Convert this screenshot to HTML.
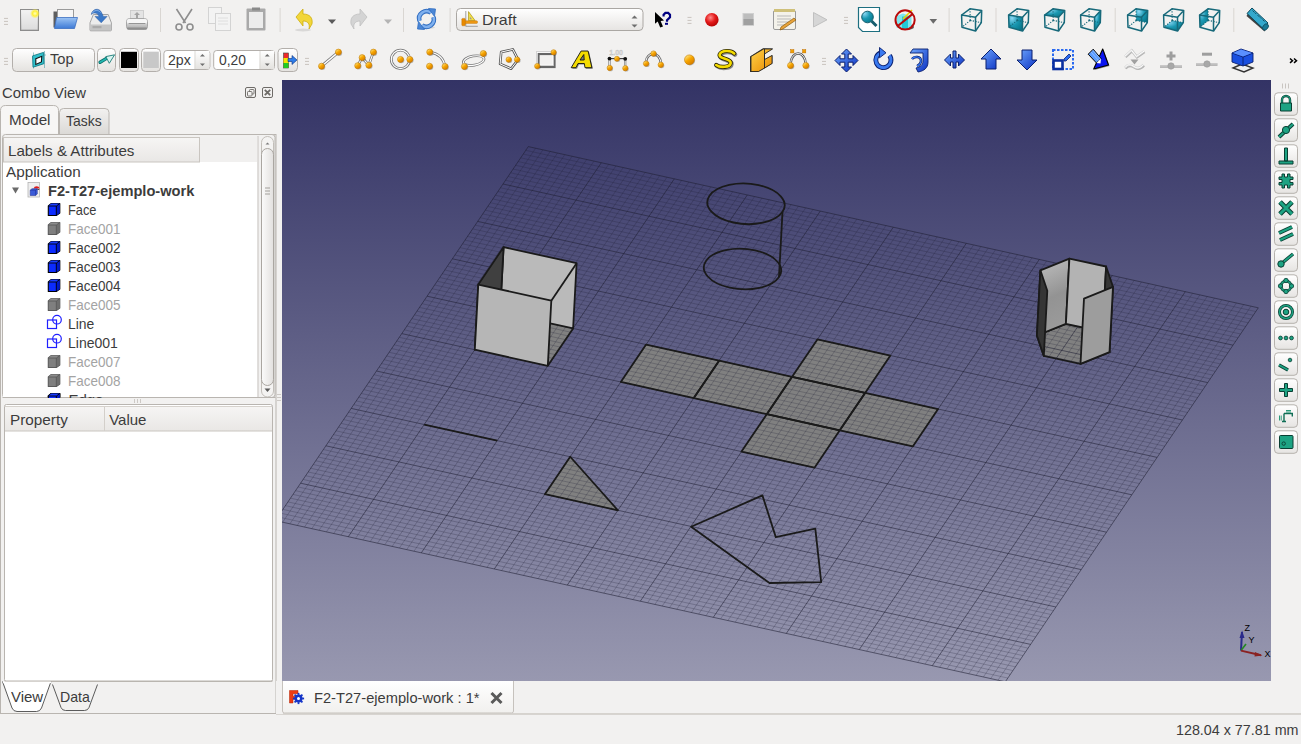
<!DOCTYPE html>
<html><head><meta charset="utf-8"><style>
*{box-sizing:border-box}
html,body{margin:0;padding:0}
body{width:1301px;height:744px;overflow:hidden;position:relative;background:#f2f1f0;font-family:"Liberation Sans",sans-serif;color:#3c3c3c}
.a{position:absolute;display:block}
.t{position:absolute;white-space:nowrap;font-size:15px;line-height:1;transform-origin:0 0;font-family:"Liberation Sans",sans-serif}
</style></head><body>
<svg class="a" style="left:0;top:0" width="1301" height="40" viewBox="0 0 1301 40">
<defs>
<linearGradient id="gOr" x1="0.2" y1="0.1" x2="0.8" y2="0.9"><stop offset="0" stop-color="#ffe27a"/><stop offset="0.45" stop-color="#f7a600"/><stop offset="1" stop-color="#d67c00"/></linearGradient>
<radialGradient id="gTeal" cx="0.25" cy="0.2" r="0.9"><stop offset="0" stop-color="#8ad8f4"/><stop offset="0.5" stop-color="#1b98b2"/><stop offset="1" stop-color="#07788c"/></radialGradient>
<linearGradient id="gBlue" x1="0" y1="0" x2="0" y2="1"><stop offset="0" stop-color="#9cc4f4"/><stop offset="1" stop-color="#3d7ad6"/></linearGradient>
<linearGradient id="gGray" x1="0" y1="0" x2="0" y2="1"><stop offset="0" stop-color="#f4f4f4"/><stop offset="1" stop-color="#a8a8a8"/></linearGradient>
<linearGradient id="gBtn" x1="0" y1="0" x2="0" y2="1"><stop offset="0" stop-color="#ffffff"/><stop offset="1" stop-color="#e6e4e2"/></linearGradient>
<radialGradient id="gRed" cx="0.4" cy="0.35" r="0.7"><stop offset="0" stop-color="#ff8a8a"/><stop offset="0.5" stop-color="#e41b1b"/><stop offset="1" stop-color="#b00000"/></radialGradient>
<radialGradient id="gGlow" cx="0.5" cy="0.5" r="0.5"><stop offset="0" stop-color="#ffffc0"/><stop offset="0.5" stop-color="#fff03a"/><stop offset="1" stop-color="#fff03a" stop-opacity="0"/></radialGradient>
</defs>
<rect x="4" y="17.9" width="4" height="1" fill="#c9c4be"/><rect x="4" y="20.9" width="4" height="1" fill="#c9c4be"/><rect x="4" y="23.9" width="4" height="1" fill="#c9c4be"/>
<rect x="20.5" y="9.5" width="18" height="21" fill="url(#gGray)" stroke="#8c8c8c" stroke-width="1"/><rect x="21.5" y="10.5" width="16" height="19" fill="#f2f2f2" opacity="0.7"/><circle cx="35" cy="13.5" r="5" fill="url(#gGlow)"/>
<path d="M53.5 11.5h7l2 2h11v14h-20z" fill="#5e5e5e"/><rect x="57.5" y="9.5" width="16" height="12" fill="#f6f6f6" stroke="#9a9a9a"/><path d="M56.5 17.5h21l-3 11h-20z" fill="url(#gBlue)" stroke="#3b6fc0" stroke-width="0.8"/>
<path d="M93.4 14.5h14.8l3.2 8.3v7.2q0 0.8-0.8 0.8h-19.8q-0.8 0-0.8-0.8v-7.2z" fill="#ececec" stroke="#9a9a9a" stroke-width="0.9"/><rect x="90.8" y="24.5" width="20.4" height="5.6" fill="#c4c4c4"/><rect x="92.5" y="26" width="9" height="2.2" fill="#9a9a9a" opacity="0.6"/><path d="M91.3 14.5C92 9 99 7 101.5 12.5L103.4 16.4H107.1L101.2 22.8L95 16.4H99C98 13 94 12 91.3 14.5Z" fill="#3a78c8" stroke="#2a5aa0" stroke-width="0.5"/><path d="M92.5 13C94 10 98.5 9.5 100.5 12.5" stroke="#8ab4e8" stroke-width="1" fill="none"/>
<rect x="130.5" y="10.5" width="13" height="9.5" fill="#e4e4e4" stroke="#c8c8c8" stroke-width="0.8"/><path d="M137 12l-3 3h2v3.5h2v-3.5h2z" fill="#a4a4a4"/><rect x="126.5" y="18.5" width="21" height="11" rx="3" fill="url(#gGray)" stroke="#a0a0a0" stroke-width="0.9"/><rect x="127" y="19" width="20" height="5" rx="2" fill="#f6f6f6"/><path d="M128.5 23.5h17" stroke="#8a8a8a" stroke-width="0.9"/><rect x="127" y="27.5" width="20" height="2" rx="1" fill="#8e8e8e"/>
<rect x="160" y="8" width="1" height="24" fill="#d9d6d2"/>
<g stroke="#8e8e8e" fill="none" stroke-width="1.6"><path d="M176.5 9l9 14M192 9l-9 14"/><circle cx="179" cy="27" r="3"/><circle cx="190" cy="27" r="3"/></g>
<g fill="#f3f3f3" stroke="#d3d3d3"><rect x="208.5" y="7.5" width="13" height="16"/><rect x="215.5" y="13.5" width="15" height="17"/></g><g stroke="#dedede"><path d="M218 18h10M218 21h10M218 24h10"/></g>
<rect x="246.5" y="8.5" width="19" height="22" rx="1" fill="#a9a9a9"/><rect x="249" y="12" width="14" height="16" fill="#ececec"/><rect x="252" y="7.5" width="8" height="3" fill="#8a8a8a"/>
<rect x="279.6" y="8" width="1" height="24" fill="#d9d6d2"/>
<path d="M296 17l7-8v5c7 0 10 4 9 10l-3 5c1-5-1-8-6-8v5z" fill="#f2d63a" stroke="#c9a800" stroke-width="0.7"/><ellipse cx="303" cy="30" rx="8" ry="1.5" fill="#000" opacity="0.1"/>
<path d="M328 19.5h8l-4 4.5z" fill="#5a5a5a"/>
<path d="M367 17l-7-8v5c-7 0-10 4-9 10l3 5c-1-5 1-8 6-8v5z" fill="#d4d4d4" stroke="#bcbcbc" stroke-width="0.7"/>
<path d="M384 19.5h8l-4 4.5z" fill="#b4b4b4"/>
<rect x="403" y="8" width="1" height="24" fill="#d9d6d2"/>
<ellipse cx="427" cy="27.5" rx="8" ry="1.5" fill="#000" opacity="0.1"/><g fill="none" stroke="#2f6cc0" stroke-width="4.6"><path d="M419.5 21A7.5 7.5 0 0 1 431 12.6"/><path d="M433.5 17A7.5 7.5 0 0 1 422 25.4"/></g><g fill="none" stroke="#7fb0ee" stroke-width="2.6"><path d="M419.5 21A7.5 7.5 0 0 1 431 12.6"/><path d="M433.5 17A7.5 7.5 0 0 1 422 25.4"/></g><path d="M428.5 8.5l7 0.5-1 7.5z" fill="#4a86d6" stroke="#2f6cc0" stroke-width="0.8"/><path d="M424.5 29.5l-7-0.5 1-7.5z" fill="#4a86d6" stroke="#2f6cc0" stroke-width="0.8"/>
<rect x="449.6" y="8" width="1" height="24" fill="#d9d6d2"/>
<rect x="456.5" y="8.5" width="186.5" height="22" rx="4" fill="url(#gBtn)" stroke="#aaa7a3"/>
<path d="M465.8 11v15.5M465.8 26.3h12" stroke="#8a8a8a" stroke-width="0.8"/><path d="M468.5 11.6v9h6.6z" fill="#f3e04a" stroke="#a08800" stroke-width="0.6"/><path d="M469.8 16.5v2.8h2.2z" fill="#9a9a9a"/><rect x="462.5" y="20.8" width="15" height="2.6" rx="1" fill="#f29a12" stroke="#b86a00" stroke-width="0.4"/><rect x="461.8" y="18.4" width="3.5" height="7.4" rx="0.8" fill="#e98a00" stroke="#b86a00" stroke-width="0.4"/>
<path d="M631.5 18.5l3-3 3 3z" fill="#6e6e6e"/><path d="M631.5 24.5l3 3 3-3z" fill="#6e6e6e"/>
<path d="M655 12L655 23.8L657.7 21.5L660.2 27.6L663 26.6L660.6 21L664 20.6Z" fill="#000"/><path d="M663.6 16.5v-1.8l1.8-1.8h2.8l1.8 1.8v2.6l-3 3v1.4" fill="none" stroke="#000080" stroke-width="2.2"/><rect x="665" y="22.8" width="3" height="2" fill="#000080"/>
<rect x="687.5" y="16.9" width="4" height="1" fill="#c9c4be"/><rect x="687.5" y="19.9" width="4" height="1" fill="#c9c4be"/><rect x="687.5" y="22.9" width="4" height="1" fill="#c9c4be"/>
<circle cx="711.8" cy="19.7" r="6.8" fill="url(#gRed)"/>
<rect x="743" y="13.5" width="10.5" height="12" fill="#bdbdbd" stroke="#d0d0d0"/><rect x="743.5" y="19" width="10" height="6" fill="#a0a0a0"/>
<rect x="773.5" y="10.5" width="22" height="19" rx="1.5" fill="#f4f2ea" stroke="#9a9a9a"/><rect x="774" y="9" width="21" height="3" fill="#cfc07a"/><g stroke="#b9b9b9"><path d="M777 16h14M777 19h14M777 22h14M777 25h10"/></g><path d="M781 27l13-9 2 2-13 9-3 1z" fill="#e8a33a" stroke="#7a4d00" stroke-width="0.6"/>
<path d="M813.5 12.5l13.5 7.3-13.5 7.2z" fill="#d6d6d6" stroke="#c0c0c0"/>
<rect x="844" y="16.9" width="4" height="1" fill="#c9c4be"/><rect x="844" y="19.9" width="4" height="1" fill="#c9c4be"/><rect x="844" y="22.9" width="4" height="1" fill="#c9c4be"/>
<path d="M858.5 7.5h21v24h-17l-4-4z" fill="#ffffff" stroke="#1d6f80" stroke-width="1.2"/><circle cx="867.5" cy="17" r="5.8" fill="url(#gTeal)" stroke="#175e6e" stroke-width="1"/><path d="M871.5 21l5 5" stroke="#175e6e" stroke-width="3"/>
<ellipse cx="907" cy="27" rx="7" ry="3" fill="#333" opacity="0.8"/><path d="M896.5 16l6.5-2.5 8.5 3v11l-6 2.5-9-2.5z" fill="#7fe6ee"/><path d="M905 16.5v13" stroke="#22c8d8" stroke-width="6"/><path d="M903 19l9-9" stroke="#f0d000" stroke-width="1.6"/><circle cx="905.1" cy="19.9" r="9.6" fill="none" stroke="#b80a0a" stroke-width="2"/><path d="M898.1 25.7L912.7 13.9" stroke="#b80a0a" stroke-width="2"/>
<path d="M929.5 19h7.6l-3.8 4.8z" fill="#6a6a6a"/>
<rect x="948.6" y="8" width="1" height="24" fill="#d9d6d2"/>
<path d="M970.2,20.4L970.0,8.8M970.2,20.4L981.3,22.6M970.2,20.4L962.0,27.2" stroke="#17697a" stroke-width="1.1" stroke-dasharray="1.3 1.3" fill="none"/><polygon points="961.6,15.0 975.5,17.2 975.5,31.0 962.0,27.2" stroke="#17697a" stroke-width="1.5" fill="none" stroke-linejoin="round"/><path d="M961.6,15.0L970.0,8.8L981.7,10.6L975.5,17.2M981.7,10.6L981.3,22.6L975.5,31.0" stroke="#17697a" stroke-width="1.5" fill="none" stroke-linejoin="round"/>
<rect x="995.5" y="8" width="1" height="24" fill="#d9d6d2"/>
<polygon points="1008.6,15.0 1022.5,17.2 1022.5,31.0 1009.0,27.2" fill="url(#gTeal)"/><path d="M1017.2,20.4L1017.0,8.8M1017.2,20.4L1028.3,22.6M1017.2,20.4L1009.0,27.2" stroke="#17697a" stroke-width="1.1" stroke-dasharray="1.3 1.3" fill="none"/><polygon points="1008.6,15.0 1022.5,17.2 1022.5,31.0 1009.0,27.2" stroke="#17697a" stroke-width="1.5" fill="none" stroke-linejoin="round"/><path d="M1008.6,15.0L1017.0,8.8L1028.7,10.6L1022.5,17.2M1028.7,10.6L1028.3,22.6L1022.5,31.0" stroke="#17697a" stroke-width="1.5" fill="none" stroke-linejoin="round"/>
<polygon points="1044.6,15.0 1053.0,8.8 1064.7,10.6 1058.5,17.2" fill="url(#gTeal)"/><path d="M1053.2,20.4L1053.0,8.8M1053.2,20.4L1064.3,22.6M1053.2,20.4L1045.0,27.2" stroke="#17697a" stroke-width="1.1" stroke-dasharray="1.3 1.3" fill="none"/><polygon points="1044.6,15.0 1058.5,17.2 1058.5,31.0 1045.0,27.2" stroke="#17697a" stroke-width="1.5" fill="none" stroke-linejoin="round"/><path d="M1044.6,15.0L1053.0,8.8L1064.7,10.6L1058.5,17.2M1064.7,10.6L1064.3,22.6L1058.5,31.0" stroke="#17697a" stroke-width="1.5" fill="none" stroke-linejoin="round"/>
<polygon points="1094.5,17.2 1100.7,10.6 1100.3,22.6 1094.5,31.0" fill="url(#gTeal)"/><path d="M1089.2,20.4L1089.0,8.8M1089.2,20.4L1100.3,22.6M1089.2,20.4L1081.0,27.2" stroke="#17697a" stroke-width="1.1" stroke-dasharray="1.3 1.3" fill="none"/><polygon points="1080.6,15.0 1094.5,17.2 1094.5,31.0 1081.0,27.2" stroke="#17697a" stroke-width="1.5" fill="none" stroke-linejoin="round"/><path d="M1080.6,15.0L1089.0,8.8L1100.7,10.6L1094.5,17.2M1100.7,10.6L1100.3,22.6L1094.5,31.0" stroke="#17697a" stroke-width="1.5" fill="none" stroke-linejoin="round"/>
<rect x="1114.7" y="8" width="1" height="24" fill="#d9d6d2"/>
<polygon points="1136.0,8.8 1147.7,10.6 1147.3,22.6 1136.2,20.4" fill="url(#gTeal)"/><path d="M1136.2,20.4L1136.0,8.8M1136.2,20.4L1147.3,22.6M1136.2,20.4L1128.0,27.2" stroke="#17697a" stroke-width="1.1" stroke-dasharray="1.3 1.3" fill="none"/><polygon points="1127.6,15.0 1141.5,17.2 1141.5,31.0 1128.0,27.2" stroke="#17697a" stroke-width="1.5" fill="none" stroke-linejoin="round"/><path d="M1127.6,15.0L1136.0,8.8L1147.7,10.6L1141.5,17.2M1147.7,10.6L1147.3,22.6L1141.5,31.0" stroke="#17697a" stroke-width="1.5" fill="none" stroke-linejoin="round"/>
<polygon points="1164.0,27.2 1177.5,31.0 1183.3,22.6 1172.2,20.4" fill="url(#gTeal)"/><path d="M1172.2,20.4L1172.0,8.8M1172.2,20.4L1183.3,22.6M1172.2,20.4L1164.0,27.2" stroke="#17697a" stroke-width="1.1" stroke-dasharray="1.3 1.3" fill="none"/><polygon points="1163.6,15.0 1177.5,17.2 1177.5,31.0 1164.0,27.2" stroke="#17697a" stroke-width="1.5" fill="none" stroke-linejoin="round"/><path d="M1163.6,15.0L1172.0,8.8L1183.7,10.6L1177.5,17.2M1183.7,10.6L1183.3,22.6L1177.5,31.0" stroke="#17697a" stroke-width="1.5" fill="none" stroke-linejoin="round"/>
<polygon points="1199.6,15.0 1208.0,8.8 1208.2,20.4 1200.0,27.2" fill="url(#gTeal)"/><path d="M1208.2,20.4L1208.0,8.8M1208.2,20.4L1219.3,22.6M1208.2,20.4L1200.0,27.2" stroke="#17697a" stroke-width="1.1" stroke-dasharray="1.3 1.3" fill="none"/><polygon points="1199.6,15.0 1213.5,17.2 1213.5,31.0 1200.0,27.2" stroke="#17697a" stroke-width="1.5" fill="none" stroke-linejoin="round"/><path d="M1199.6,15.0L1208.0,8.8L1219.7,10.6L1213.5,17.2M1219.7,10.6L1219.3,22.6L1213.5,31.0" stroke="#17697a" stroke-width="1.5" fill="none" stroke-linejoin="round"/>
<rect x="1233.3" y="8" width="1" height="24" fill="#d9d6d2"/>
<path d="M1246.5 16l3-5 18 15-3 5.5z" fill="#222" opacity="0.85"/><path d="M1247 13.5l5-5.5 16 15-5 5.5z" fill="#34a8cc" stroke="#0e4a5c" stroke-width="1"/><g stroke="#0e4a5c" stroke-width="0.9"><path d="M1252.5 10.5l2 2M1255 12.8l1.3 1.3M1257.5 15l2 2M1260 17.3l1.3 1.3M1262.5 19.5l2 2"/></g><ellipse cx="1265.5" cy="27" rx="2.5" ry="3.5" transform="rotate(40 1265.5 27)" fill="#1a7a96" stroke="#0e4a5c" stroke-width="0.8"/>
</svg>
<svg class="a" style="left:0;top:40px" width="1301" height="40" viewBox="0 40 1301 40">
<defs>
<linearGradient id="gBtn2" x1="0" y1="0" x2="0" y2="1"><stop offset="0" stop-color="#ffffff"/><stop offset="1" stop-color="#e4e2df"/></linearGradient>
<linearGradient id="gBl" x1="0" y1="0" x2="1" y2="1"><stop offset="0" stop-color="#6fa8ff"/><stop offset="1" stop-color="#0a2fc0"/></linearGradient>
<linearGradient id="gOr2" x1="0" y1="0" x2="1" y2="1"><stop offset="0" stop-color="#ffd24a"/><stop offset="1" stop-color="#e88a00"/></linearGradient>
</defs>
<rect x="4" y="57.9" width="4" height="1" fill="#c9c4be"/><rect x="4" y="60.9" width="4" height="1" fill="#c9c4be"/><rect x="4" y="63.9" width="4" height="1" fill="#c9c4be"/>
<rect x="12.5" y="48.5" width="82" height="23" rx="4" fill="url(#gBtn2)" stroke="#b3afab"/>
<path d="M33.5 52.5v16M44.5 51v17M32 58h2M43 55h3" stroke="#4aa0a8" stroke-width="0.6"/><path d="M32.6 55.9L43.6 52.4L43.9 63.7L33 67.2Z" fill="#2fc0cc" stroke="#127a86" stroke-width="0.9"/><path d="M35.8 58.7L41.8 56.3L41.4 61.9L35.8 64.4Z" fill="#ffffff" stroke="#111" stroke-width="1.1"/>
<rect x="97.5" y="48.5" width="18" height="23" rx="4" fill="url(#gBtn2)" stroke="#b3afab"/>
<path d="M100.1 62.3L106.5 58.4" stroke="#0e6e6a" stroke-width="3.4" stroke-linecap="round"/><path d="M100.1 62.3L106.5 58.4" stroke="#22b8b0" stroke-width="1.8" stroke-linecap="round"/><path d="M105.8 56.6L114.6 54.8L109.3 63.3Z" fill="#d8f4f0" stroke="#1a7a76" stroke-width="0.9" stroke-linejoin="round"/>
<rect x="119.5" y="48.5" width="19" height="23" rx="4" fill="url(#gBtn2)" stroke="#b3afab"/>
<rect x="121" y="51.8" width="16" height="16.2" fill="#000"/>
<rect x="141.5" y="48.5" width="19" height="23" rx="4" fill="url(#gBtn2)" stroke="#b3afab"/>
<rect x="143.3" y="51.7" width="15.5" height="16.3" fill="#c8c8c8"/>
<rect x="163.9" y="50.5" width="46.0" height="19" rx="3" fill="#ffffff" stroke="#b3afab"/>
<rect x="194.5" y="51" width="14.900000000000006" height="18" fill="url(#gBtn2)"/><rect x="194.5" y="51" width="1" height="18" fill="#dcd9d5"/>
<path d="M199.95 56.5l2.5-2.5 2.5 2.5z" fill="#6e6e6e"/><path d="M199.95 63.5l2.5 2.5 2.5-2.5z" fill="#6e6e6e"/>
<rect x="213.7" y="50.5" width="60.80000000000001" height="19" rx="3" fill="#ffffff" stroke="#b3afab"/>
<rect x="259.5" y="51" width="14.5" height="18" fill="url(#gBtn2)"/><rect x="259.5" y="51" width="1" height="18" fill="#dcd9d5"/>
<path d="M264.75 56.5l2.5-2.5 2.5 2.5z" fill="#6e6e6e"/><path d="M264.75 63.5l2.5 2.5 2.5-2.5z" fill="#6e6e6e"/>
<rect x="278.0" y="48.5" width="19.5" height="23" rx="4" fill="url(#gBtn2)" stroke="#b3afab"/>
<rect x="283.5" y="53" width="5" height="15" fill="#ef2a2a" stroke="#444" stroke-width="0.6"/><rect x="283.5" y="58" width="5" height="5" fill="#f2e600"/><rect x="283.5" y="63" width="5" height="5" fill="#22cc22"/><path d="M288 58.5h4v-3l5 4.5-5 4.5v-3h-4z" fill="#2e7de8" stroke="#0a2f80" stroke-width="0.6"/>
<rect x="305" y="57.9" width="4" height="1" fill="#c9c4be"/><rect x="305" y="60.9" width="4" height="1" fill="#c9c4be"/><rect x="305" y="63.9" width="4" height="1" fill="#c9c4be"/>
<path d="M321.5 66.2L338.4 52.1" stroke="#777" stroke-width="3"/><path d="M321.5 66.2L338.4 52.1" stroke="#fff" stroke-width="1.4"/>
<circle cx="322.3" cy="67.0" r="3" fill="#000" opacity="0.25"/><circle cx="321.5" cy="66.2" r="3" fill="url(#gOr)" stroke="#c47a00" stroke-width="0.6"/><circle cx="339.2" cy="52.9" r="3" fill="#000" opacity="0.25"/><circle cx="338.4" cy="52.1" r="3" fill="url(#gOr)" stroke="#c47a00" stroke-width="0.6"/>
<path d="M357.7 65.7L362.1 57.6L368.8 65.2L373.4 52.1" stroke="#777" stroke-width="2.6" fill="none"/><path d="M357.7 65.7L362.1 57.6L368.8 65.2L373.4 52.1" stroke="#fff" stroke-width="1.1" fill="none"/>
<circle cx="358.5" cy="66.5" r="3" fill="#000" opacity="0.25"/><circle cx="357.7" cy="65.7" r="3" fill="url(#gOr)" stroke="#c47a00" stroke-width="0.6"/><circle cx="362.90000000000003" cy="58.4" r="3" fill="#000" opacity="0.25"/><circle cx="362.1" cy="57.6" r="3" fill="url(#gOr)" stroke="#c47a00" stroke-width="0.6"/><circle cx="369.6" cy="66.0" r="3" fill="#000" opacity="0.25"/><circle cx="368.8" cy="65.2" r="3" fill="url(#gOr)" stroke="#c47a00" stroke-width="0.6"/><circle cx="374.2" cy="52.9" r="3" fill="#000" opacity="0.25"/><circle cx="373.4" cy="52.1" r="3" fill="url(#gOr)" stroke="#c47a00" stroke-width="0.6"/>
<circle cx="400.5" cy="59.4" r="9.2" fill="none" stroke="#777" stroke-width="2.8"/><circle cx="400.5" cy="59.4" r="9.2" fill="none" stroke="#fff" stroke-width="1.2"/>
<circle cx="401.3" cy="60.199999999999996" r="3" fill="#000" opacity="0.25"/><circle cx="400.5" cy="59.4" r="3" fill="url(#gOr)" stroke="#c47a00" stroke-width="0.6"/><circle cx="410.6" cy="60.199999999999996" r="3" fill="#000" opacity="0.25"/><circle cx="409.8" cy="59.4" r="3" fill="url(#gOr)" stroke="#c47a00" stroke-width="0.6"/>
<path d="M429.7 52.1Q443 54 445 66.5" stroke="#777" stroke-width="2.6" fill="none"/><path d="M429.7 52.1Q443 54 445 66.5" stroke="#fff" stroke-width="1.1" fill="none"/>
<circle cx="430.5" cy="52.9" r="3" fill="#000" opacity="0.25"/><circle cx="429.7" cy="52.1" r="3" fill="url(#gOr)" stroke="#c47a00" stroke-width="0.6"/><circle cx="430.3" cy="67.0" r="3" fill="#000" opacity="0.25"/><circle cx="429.5" cy="66.2" r="3" fill="url(#gOr)" stroke="#c47a00" stroke-width="0.6"/><circle cx="445.8" cy="67.3" r="3" fill="#000" opacity="0.25"/><circle cx="445" cy="66.5" r="3" fill="url(#gOr)" stroke="#c47a00" stroke-width="0.6"/>
<ellipse cx="473.7" cy="60.6" rx="10.5" ry="4.6" transform="rotate(-10 473.7 60.6)" fill="none" stroke="#777" stroke-width="2.6"/><ellipse cx="473.7" cy="60.6" rx="10.5" ry="4.6" transform="rotate(-10 473.7 60.6)" fill="none" stroke="#fff" stroke-width="1.1"/>
<circle cx="484.1" cy="54.3" r="3" fill="#000" opacity="0.25"/><circle cx="483.3" cy="53.5" r="3" fill="url(#gOr)" stroke="#c47a00" stroke-width="0.6"/><circle cx="465.2" cy="67.3" r="3" fill="#000" opacity="0.25"/><circle cx="464.4" cy="66.5" r="3" fill="url(#gOr)" stroke="#c47a00" stroke-width="0.6"/>
<path d="M501.2 52.1L512.8 49.4L518.1 59.6L511.1 68.7L500.1 63.9Z" fill="none" stroke="#555" stroke-width="2.6" stroke-linejoin="round"/><path d="M501.2 52.1L512.8 49.4L518.1 59.6L511.1 68.7L500.1 63.9Z" fill="none" stroke="#fff" stroke-width="1" stroke-linejoin="round"/>
<circle cx="509.5" cy="60.4" r="2.7" fill="#000" opacity="0.25"/><circle cx="508.7" cy="59.6" r="2.7" fill="url(#gOr)" stroke="#c47a00" stroke-width="0.6"/><circle cx="517.9" cy="60.4" r="2.7" fill="#000" opacity="0.25"/><circle cx="517.1" cy="59.6" r="2.7" fill="url(#gOr)" stroke="#c47a00" stroke-width="0.6"/>
<rect x="538.5" y="54" width="16" height="13" fill="none" stroke="#666" stroke-width="2.2"/><rect x="537" y="52.2" width="16" height="13" fill="none" stroke="#fff" stroke-width="1"/><rect x="536.5" y="51.7" width="17" height="14" fill="none" stroke="#bbb" stroke-width="0.6"/>
<circle cx="538.0" cy="66.89999999999999" r="2.6" fill="#000" opacity="0.25"/><circle cx="537.2" cy="66.1" r="2.6" fill="url(#gOr)" stroke="#c47a00" stroke-width="0.6"/><circle cx="554.4" cy="53.099999999999994" r="2.6" fill="#000" opacity="0.25"/><circle cx="553.6" cy="52.3" r="2.6" fill="url(#gOr)" stroke="#c47a00" stroke-width="0.6"/>
<path d="M572.2 68.7L582.1 52L589.1 52L592.9 68.7L586 68.7L585.3 64.5L579 64.5L577 68.7Z" fill="#333" opacity="0.6"/><path d="M571.2 67.7L581.1 51L588.1 51L591.9 67.7L585 67.7L584.3 63.5L578 63.5L576 67.7Z M580 60L583.8 54.5L584.2 60Z" fill="#f5dc00" fill-rule="evenodd" stroke="#111" stroke-width="0.9" stroke-linejoin="round"/>
<path d="M609.5 59v9M625.2 59v9" stroke="#777" stroke-width="2.2" fill="none"/><path d="M609.5 59v9M625.2 59v9" stroke="#fff" stroke-width="0.8" fill="none"/><path d="M609.5 58.6h15.7" stroke="#444" stroke-width="1.2"/><circle cx="609.5" cy="58.6" r="1.9" fill="#111"/><circle cx="625.2" cy="58.8" r="1.9" fill="#111"/><text x="609.3" y="55.3" font-family="Liberation Sans" font-size="7" font-weight="bold" fill="#dcdcdc" stroke="#bdbdbd" stroke-width="0.3">1.00</text>
<circle cx="617.6999999999999" cy="59.599999999999994" r="2.5" fill="#000" opacity="0.25"/><circle cx="616.9" cy="58.8" r="2.5" fill="url(#gOr)" stroke="#c47a00" stroke-width="0.6"/><circle cx="610.5" cy="68.7" r="2.6" fill="#000" opacity="0.25"/><circle cx="609.7" cy="67.9" r="2.6" fill="url(#gOr)" stroke="#c47a00" stroke-width="0.6"/><circle cx="626.0999999999999" cy="69.0" r="2.6" fill="#000" opacity="0.25"/><circle cx="625.3" cy="68.2" r="2.6" fill="url(#gOr)" stroke="#c47a00" stroke-width="0.6"/>
<path d="M645.8 62.5C646.5 51 660 51 661 63.5" stroke="#666" stroke-width="2.6" fill="none"/><path d="M645.8 62.5C646.5 51 660 51 661 63.5" stroke="#fff" stroke-width="1" fill="none"/>
<circle cx="646.9" cy="64.4" r="2.7" fill="#000" opacity="0.25"/><circle cx="646.1" cy="63.6" r="2.7" fill="url(#gOr)" stroke="#c47a00" stroke-width="0.6"/><circle cx="654.3" cy="54.4" r="2.7" fill="#000" opacity="0.25"/><circle cx="653.5" cy="53.6" r="2.7" fill="url(#gOr)" stroke="#c47a00" stroke-width="0.6"/><circle cx="661.5999999999999" cy="65.6" r="2.7" fill="#000" opacity="0.25"/><circle cx="660.8" cy="64.8" r="2.7" fill="url(#gOr)" stroke="#c47a00" stroke-width="0.6"/>
<circle cx="690.1999999999999" cy="60.599999999999994" r="4.9" fill="#000" opacity="0.25"/><circle cx="689.4" cy="59.8" r="4.9" fill="url(#gOr)" stroke="#c47a00" stroke-width="0.6"/>
<path d="M735 54.5C732 51 722 51 720.5 55.5C719 60 732 59.5 731.5 64C731 68.5 721 69 717 66" fill="none" stroke="#333" stroke-width="4.6" opacity="0.55" stroke-linecap="round"/><path d="M734.2 53.5C731.2 50 721.2 50 719.7 54.5C718.2 59 731.2 58.5 730.7 63C730.2 67.5 720.2 68 716.2 65" fill="none" stroke="#2a2400" stroke-width="4.2" stroke-linecap="round"/><path d="M734.2 53.5C731.2 50 721.2 50 719.7 54.5C718.2 59 731.2 58.5 730.7 63C730.2 67.5 720.2 68 716.2 65" fill="none" stroke="#f5dc00" stroke-width="2.6" stroke-linecap="round"/>
<path d="M750 56.5L763 48.3L773 48.5L764.5 54L764.5 59.5L772.5 55L772.5 63.5L764.5 68.5L758 72L750 72Z" fill="#3a3a3a"/><path d="M751 56.5L763.5 49L772.5 49L764.5 54L764.5 59.5L772 55.5L772 63.5L764.5 68L758.5 71.5L751 71.5Z" fill="url(#gOr2)" stroke="#222" stroke-width="0.8" stroke-linejoin="round"/><path d="M764.5 49v19" stroke="#222" stroke-width="0.9"/>
<path d="M790.5 64C791.5 50 804.8 50 805.8 64" stroke="#555" stroke-width="2.4" fill="none"/><path d="M790.5 64C791.5 50 804.8 50 805.8 64" stroke="#fff" stroke-width="0.9" fill="none"/><rect x="790.7" y="49.7" width="3.2" height="3.2" fill="#f2a000" stroke="#c07000" stroke-width="0.5"/><rect x="802.6" y="49.7" width="3.2" height="3.2" fill="#f2a000" stroke="#c07000" stroke-width="0.5"/>
<circle cx="791.3" cy="66.3" r="3" fill="#000" opacity="0.25"/><circle cx="790.5" cy="65.5" r="3" fill="url(#gOr)" stroke="#c47a00" stroke-width="0.6"/><circle cx="806.5999999999999" cy="66.3" r="3" fill="#000" opacity="0.25"/><circle cx="805.8" cy="65.5" r="3" fill="url(#gOr)" stroke="#c47a00" stroke-width="0.6"/>
<rect x="822" y="57.9" width="4" height="1" fill="#c9c4be"/><rect x="822" y="60.9" width="4" height="1" fill="#c9c4be"/><rect x="822" y="63.9" width="4" height="1" fill="#c9c4be"/>
<path d="M846.5 49l5 5h-3.3v4.8h4.8v-3.3l5 5-5 5v-3.3h-4.8v4.8h3.3l-5 5-5-5h3.3v-4.8h-4.8v3.3l-5-5 5-5v3.3h4.8v-4.8h-3.3z" fill="url(#gBl)" stroke="#0a1f6e" stroke-width="1" stroke-linejoin="round" />
<path d="M881 52.8A7.6 7.6 0 1 0 889.5 55.5" fill="none" stroke="#0a1f6e" stroke-width="4.8"/><path d="M881 52.8A7.6 7.6 0 1 0 889.5 55.5" fill="none" stroke="#3a7af0" stroke-width="3"/><path d="M879.5 47.5l6.5 5.3-6.5 5z" fill="#3a7af0" stroke="#0a1f6e" stroke-width="0.9" stroke-linejoin="round"/>
<path d="M910 53l3-4h15v13c0 6-4 9-10 10l-2-4c4-1 7-3 7-7v-8h-11z" fill="url(#gBl)" stroke="#0a1f6e" stroke-width="0.9"/><path d="M912 59c2-3 9-3 9 2 0 3-2 4-4 5" fill="none" stroke="#0a1f6e" stroke-width="2.4"/><path d="M912 59c2-3 9-3 9 2 0 3-2 4-4 5" fill="none" stroke="#3c80ff" stroke-width="1.2"/>
<path d="M944.5 60l6-6v4h2.5v-7h3v7h2.5v-4l6 6-6 6v-4h-2.5v6h-3v-6h-2.5v4z" fill="url(#gBl)" stroke="#0a1f6e" stroke-width="1" stroke-linejoin="round" />
<path d="M991 49l10 10h-5v10h-10v-10h-5z" fill="url(#gBl)" stroke="#0a1f6e" stroke-width="1" stroke-linejoin="round" />
<path d="M1027 70l10-10h-5v-10h-10v10h-5z" fill="url(#gBl)" stroke="#0a1f6e" stroke-width="1" stroke-linejoin="round" />
<rect x="1053" y="50" width="20" height="19" fill="none" stroke="#2a6af0" stroke-width="2" stroke-dasharray="2.5 1.5"/><rect x="1053.5" y="60.5" width="9" height="8.5" fill="#fff" stroke="#0a2fa0" stroke-width="2.6"/><path d="M1064 59l5-5 2 2-5 5h-2z" fill="#2a6af0" stroke="#0a1f6e" stroke-width="0.8"/>
<path d="M1094.5 70L1103.5 50L1109.5 66Z" fill="#222" opacity="0.5"/><path d="M1093.7 69L1102.7 49L1108.5 65Z" fill="#0a14f0" stroke="#000" stroke-width="1.1" stroke-linejoin="round"/><path d="M1088.2 54.2L1093.2 49.2L1101 58.5L1096.5 63Z" fill="#5a9cff" stroke="#000" stroke-width="1"/><path d="M1091 52l7.5 8.5M1093 50.5l7 8" stroke="#a8ccff" stroke-width="0.7"/><path d="M1096.5 63L1101 58.5L1100.5 63.5Z" fill="#fff"/>
<path d="M1125.5 57l6.5-6 5 6.3 7.5-5.3M1125.5 68.5c3-4 6-3 9-1s6 2 9.5-2" fill="none" stroke="#9a9a9a" stroke-width="2.6" opacity="0.7"/><path d="M1125 56.2l6.5-6 5 6.3 7.5-5.3M1125 67.5c3-4 6-3 9-1s6 2 9.5-2" fill="none" stroke="#d8d8d8" stroke-width="2.2"/><path d="M1125 56.2l6.5-6 5 6.3 7.5-5.3M1125 67.5c3-4 6-3 9-1s6 2 9.5-2" fill="none" stroke="#fff" stroke-width="1"/><path d="M1130.5 59.5h8l-4 5z" fill="#a0a0a0"/>
<path d="M1160 66.5h22" stroke="#a9a9a9" stroke-width="2.6"/><path d="M1160 66h22" stroke="#e2e2e2" stroke-width="0.8"/><circle cx="1171" cy="66" r="3.2" fill="#a8a8a8" stroke="#9a9a9a" stroke-width="0.6"/><path d="M1171 51.5v9M1166.5 56h9" stroke="#9e9e9e" stroke-width="3"/>
<path d="M1196 64.5h21.5" stroke="#a9a9a9" stroke-width="2.6"/><path d="M1196 64h21.5" stroke="#e2e2e2" stroke-width="0.8"/><circle cx="1207" cy="64" r="3.2" fill="#a8a8a8" stroke="#9a9a9a" stroke-width="0.6"/><path d="M1202 54.2h10" stroke="#9e9e9e" stroke-width="3"/>
<path d="M1233 68l9-4 11 4-9 4z" fill="#f0f0f0" stroke="#333" stroke-width="1.4"/><path d="M1232 53l9-4 12 4v9l-10 4-11-4z" fill="#1a50e0" stroke="#0a1f6e" stroke-width="0.9"/><path d="M1232 53l11 4 10-4M1243 57v9" fill="none" stroke="#0a1f6e" stroke-width="0.9"/><path d="M1233 53l8-3.5 11 3.5-9 3.5z" fill="#5a90ff"/>
<path d="M1290 58.5l2.5 2.2-2.5 2.2M1294 58.5l2.5 2.2-2.5 2.2" fill="none" stroke="#000" stroke-width="1.5"/>
</svg>
<svg class="a" style="left:0;top:80px" width="282" height="640" viewBox="0 80 282 640">
<defs>
<linearGradient id="gHdr" x1="0" y1="0" x2="0" y2="1"><stop offset="0" stop-color="#f6f5f4"/><stop offset="1" stop-color="#e9e7e5"/></linearGradient>
<linearGradient id="gTab" x1="0" y1="0" x2="0" y2="1"><stop offset="0" stop-color="#f2f1f0"/><stop offset="1" stop-color="#dbd9d6"/></linearGradient>
<linearGradient id="gSl" x1="0" y1="0" x2="1" y2="0"><stop offset="0" stop-color="#fbfbfb"/><stop offset="1" stop-color="#e2e0de"/></linearGradient>
</defs>
<rect x="245.5" y="87.5" width="10" height="10" rx="1.5" fill="none" stroke="#6e6b67" stroke-width="1"/><rect x="249.5" y="89.5" width="4.5" height="4.5" rx="0.8" fill="none" stroke="#6e6b67" stroke-width="0.9"/><rect x="247.5" y="91.5" width="4.5" height="4.5" rx="0.8" fill="#f2f1f0" stroke="#6e6b67" stroke-width="0.9"/>
<rect x="262.5" y="87.5" width="10" height="10" rx="1.5" fill="none" stroke="#6e6b67" stroke-width="1"/><path d="M264.8 89.8l5.4 5.4M270.2 89.8l-5.4 5.4" stroke="#6e6b67" stroke-width="1.8"/>
<rect x="0.5" y="134.5" width="275.5" height="579" fill="#f2f1f0" stroke="#b9b5b0"/>
<path d="M59.5 134.5V112.5q0-4 4-4h41.5q4 0 4 4V134.5" fill="url(#gTab)" stroke="#b9b5b0"/>
<path d="M0.5 135V110.5q0-5 5-5h48q5 0 5 5V135" fill="#f7f6f5" stroke="#b9b5b0"/><rect x="1" y="133" width="57" height="3" fill="#f4f3f2"/>
<rect x="2.5" y="134.5" width="272.5" height="263" rx="3" fill="#f2f1f0" stroke="#b9b5b0"/>
<rect x="3" y="137" width="254.5" height="260.5" fill="#ffffff"/><rect x="257.5" y="136" width="1" height="262" fill="#c8c4bf"/>
<rect x="3" y="137" width="254" height="25" fill="#f1f0ef"/><rect x="3.5" y="137.5" width="196" height="24.5" fill="url(#gHdr)" stroke="#c9c5c0"/>
<rect x="261.5" y="136.5" width="12" height="260.5" rx="6" fill="#f4f3f2" stroke="#c2beb9"/>
<rect x="261.5" y="148.5" width="12" height="237" rx="6" fill="url(#gSl)" stroke="#aaa6a1"/>
<path d="M265.5 144.5l2-2 2 2z" fill="#7a7a7a"/><path d="M264.5 388.5h6l-3 3.5z" fill="#5a5a5a"/>
<path d="M265 188h5M265 191h5M265 194h5" stroke="#9a9692" stroke-width="0.9"/>
<path d="M12 187.5h7l-3.5 6z" fill="#6a6a6a"/>
<rect x="28" y="182.5" width="11.5" height="14.5" fill="#eeeeee" stroke="#b4b4b4" stroke-width="0.8"/><path d="M33.5 188.5a3.3 3.3 0 0 1 6.3 0z" fill="#dd1a1a"/><path d="M30.2 190.2l1.8-1.5h5.3v5.3l-1.8 1.5h-5.3z" fill="#3a5ad8" stroke="#1a2a90" stroke-width="0.5"/><path d="M30.2 190.2h5.3v5.3M35.5 190.2l1.8-1.5" fill="none" stroke="#1a2a90" stroke-width="0.5"/><path d="M37.5 189.5h1.8" stroke="#333" stroke-width="0.9"/>
<path d="M48.3 206l3-2.5h8.5v9.5l-3.5 2.5h-8z" fill="#0b2bff" stroke="#000000" stroke-width="1.1" stroke-linejoin="round"/><path d="M56.3 206l3.5-2.5v9.5l-3.5 2.5z" fill="#0018c8"/><path d="M48.3 206l3-2.5h8.5l-3.5 2.5z" fill="#1a3cff"/><path d="M48.3 206h8v9.5M56.3 206l3.5-2.5" fill="none" stroke="#000000" stroke-width="0.9"/>
<path d="M48.3 225l3-2.5h8.5v9.5l-3.5 2.5h-8z" fill="#7f7f7f" stroke="#5a5a5a" stroke-width="1.1" stroke-linejoin="round"/><path d="M56.3 225l3.5-2.5v9.5l-3.5 2.5z" fill="#6e6e6e"/><path d="M48.3 225l3-2.5h8.5l-3.5 2.5z" fill="#8c8c8c"/><path d="M48.3 225h8v9.5M56.3 225l3.5-2.5" fill="none" stroke="#5a5a5a" stroke-width="0.9"/>
<path d="M48.3 244l3-2.5h8.5v9.5l-3.5 2.5h-8z" fill="#0b2bff" stroke="#000000" stroke-width="1.1" stroke-linejoin="round"/><path d="M56.3 244l3.5-2.5v9.5l-3.5 2.5z" fill="#0018c8"/><path d="M48.3 244l3-2.5h8.5l-3.5 2.5z" fill="#1a3cff"/><path d="M48.3 244h8v9.5M56.3 244l3.5-2.5" fill="none" stroke="#000000" stroke-width="0.9"/>
<path d="M48.3 263l3-2.5h8.5v9.5l-3.5 2.5h-8z" fill="#0b2bff" stroke="#000000" stroke-width="1.1" stroke-linejoin="round"/><path d="M56.3 263l3.5-2.5v9.5l-3.5 2.5z" fill="#0018c8"/><path d="M48.3 263l3-2.5h8.5l-3.5 2.5z" fill="#1a3cff"/><path d="M48.3 263h8v9.5M56.3 263l3.5-2.5" fill="none" stroke="#000000" stroke-width="0.9"/>
<path d="M48.3 282l3-2.5h8.5v9.5l-3.5 2.5h-8z" fill="#0b2bff" stroke="#000000" stroke-width="1.1" stroke-linejoin="round"/><path d="M56.3 282l3.5-2.5v9.5l-3.5 2.5z" fill="#0018c8"/><path d="M48.3 282l3-2.5h8.5l-3.5 2.5z" fill="#1a3cff"/><path d="M48.3 282h8v9.5M56.3 282l3.5-2.5" fill="none" stroke="#000000" stroke-width="0.9"/>
<path d="M48.3 301l3-2.5h8.5v9.5l-3.5 2.5h-8z" fill="#7f7f7f" stroke="#5a5a5a" stroke-width="1.1" stroke-linejoin="round"/><path d="M56.3 301l3.5-2.5v9.5l-3.5 2.5z" fill="#6e6e6e"/><path d="M48.3 301l3-2.5h8.5l-3.5 2.5z" fill="#8c8c8c"/><path d="M48.3 301h8v9.5M56.3 301l3.5-2.5" fill="none" stroke="#5a5a5a" stroke-width="0.9"/>
<rect x="47.5" y="320.0" width="9" height="8.5" fill="none" stroke="#2020ff" stroke-width="1.2"/><circle cx="57" cy="319.7" r="4.3" fill="none" stroke="#2020ff" stroke-width="1.2"/>
<rect x="47.5" y="339.0" width="9" height="8.5" fill="none" stroke="#2020ff" stroke-width="1.2"/><circle cx="57" cy="338.7" r="4.3" fill="none" stroke="#2020ff" stroke-width="1.2"/>
<path d="M48.3 358l3-2.5h8.5v9.5l-3.5 2.5h-8z" fill="#7f7f7f" stroke="#5a5a5a" stroke-width="1.1" stroke-linejoin="round"/><path d="M56.3 358l3.5-2.5v9.5l-3.5 2.5z" fill="#6e6e6e"/><path d="M48.3 358l3-2.5h8.5l-3.5 2.5z" fill="#8c8c8c"/><path d="M48.3 358h8v9.5M56.3 358l3.5-2.5" fill="none" stroke="#5a5a5a" stroke-width="0.9"/>
<path d="M48.3 377l3-2.5h8.5v9.5l-3.5 2.5h-8z" fill="#7f7f7f" stroke="#5a5a5a" stroke-width="1.1" stroke-linejoin="round"/><path d="M56.3 377l3.5-2.5v9.5l-3.5 2.5z" fill="#6e6e6e"/><path d="M48.3 377l3-2.5h8.5l-3.5 2.5z" fill="#8c8c8c"/><path d="M48.3 377h8v9.5M56.3 377l3.5-2.5" fill="none" stroke="#5a5a5a" stroke-width="0.9"/>
<path d="M48.3 396l3-2.5h8.5v9.5l-3.5 2.5h-8z" fill="#0b2bff" stroke="#000000" stroke-width="1.1" stroke-linejoin="round"/><path d="M56.3 396l3.5-2.5v9.5l-3.5 2.5z" fill="#0018c8"/><path d="M48.3 396l3-2.5h8.5l-3.5 2.5z" fill="#1a3cff"/><path d="M48.3 396h8v9.5M56.3 396l3.5-2.5" fill="none" stroke="#000000" stroke-width="0.9"/>
<rect x="3" y="397.5" width="255" height="8" fill="#f2f1f0"/><rect x="2.5" y="397" width="273" height="1" fill="#b9b5b0"/>
<path d="M134.5 399v4M137.5 399v4M140.5 399v4" stroke="#c8c4bf" stroke-width="0.9"/>
<rect x="4.5" y="404.5" width="268" height="277" rx="2" fill="#ffffff" stroke="#b9b5b0"/>
<rect x="5" y="406.5" width="267" height="24.5" fill="url(#gHdr)"/><rect x="5" y="430.5" width="267" height="1" fill="#c9c5c0"/><rect x="104" y="407" width="1" height="24" fill="#d3cfca"/><rect x="5" y="406" width="267" height="1" fill="#d6d2cd"/>
<path d="M2.5 681.5L12 708q1.5 3.5 5 3.5h19.5q3.5 0 5-3.5l9.5-26.5" fill="#ffffff" stroke="#4a4a4a" stroke-width="0.9"/>
<path d="M52.5 684.5L61 707.5q1.2 3 4.5 3h19q3.3 0 4.5-3l8.5-23" fill="#f2f1f0" stroke="#4a4a4a" stroke-width="0.9"/>
<rect x="4.5" y="680.5" width="268" height="1.2" fill="#b9b5b0"/><rect x="3" y="681.7" width="48" height="1.5" fill="#ffffff"/>
<path d="M277 394.5h4M277 397.5h4M277 400.5h4" stroke="#c8c4bf" stroke-width="0.9"/>
</svg>
<div class="a" style="left:0;top:137px;width:257px;height:260.5px;overflow:hidden"><svg class="a" style="left:0;top:-137px" width="257" height="440" viewBox="0 0 257 440"><path d="M48.3 396l3-2.5h8.5v9.5l-3.5 2.5h-8z" fill="#0b2bff" stroke="#000000" stroke-width="1.1" stroke-linejoin="round"/><path d="M56.3 396l3.5-2.5v9.5l-3.5 2.5z" fill="#0018c8"/><path d="M48.3 396l3-2.5h8.5l-3.5 2.5z" fill="#1a3cff"/><path d="M48.3 396h8v9.5M56.3 396l3.5-2.5" fill="none" stroke="#000000" stroke-width="0.9"/></svg><div class="t" style="left:68.4px;top:255.30px;font-size:15px;color:#3c3c3c">Edge</div></div>
<svg width="989" height="601" viewBox="282 80 989 601" style="position:absolute;left:282px;top:80px;display:block">
<defs><linearGradient id="bg" x1="0" y1="0" x2="0" y2="1"><stop offset="0" stop-color="#333365"/><stop offset="1" stop-color="#9898b0"/></linearGradient></defs>
<rect x="282" y="80" width="989" height="601" fill="url(#bg)"/>
<polygon points="646.10,344.56 719.10,360.68 693.80,398.08 620.80,381.96" fill="#808080"/>
<polygon points="719.10,360.68 792.10,376.80 766.80,414.20 693.80,398.08" fill="#808080"/>
<polygon points="792.10,376.80 865.10,392.92 839.80,430.32 766.80,414.20" fill="#808080"/>
<polygon points="865.10,392.92 938.10,409.04 912.80,446.44 839.80,430.32" fill="#808080"/>
<polygon points="817.40,339.40 890.40,355.52 865.10,392.92 792.10,376.80" fill="#808080"/>
<polygon points="766.80,414.20 839.80,430.32 814.50,467.72 741.50,451.60" fill="#808080"/>
<polygon points="570.20,456.76 544.90,494.16 617.90,510.28" fill="#808080"/>
<polygon points="500.10,312.32 573.10,328.44 547.80,365.84 474.80,349.72" fill="#808080"/>
<polygon points="1036.90,335.50 1065.90,323.80 1102.60,331.70 1109.50,352.10 1080.50,363.80 1043.80,355.90" fill="#808080" stroke="#1a1a1a" stroke-width="1.8" stroke-linejoin="round"/>
<g transform="matrix(7.3 1.612 -2.5300000000000002 3.7399999999999998 528.3 146.6)">
<path d="M1 0V100M0 1H100M2 0V100M0 2H100M3 0V100M0 3H100M4 0V100M0 4H100M5 0V100M0 5H100M6 0V100M0 6H100M7 0V100M0 7H100M8 0V100M0 8H100M9 0V100M0 9H100M11 0V100M0 11H100M12 0V100M0 12H100M13 0V100M0 13H100M14 0V100M0 14H100M15 0V100M0 15H100M16 0V100M0 16H100M17 0V100M0 17H100M18 0V100M0 18H100M19 0V100M0 19H100M21 0V100M0 21H100M22 0V100M0 22H100M23 0V100M0 23H100M24 0V100M0 24H100M25 0V100M0 25H100M26 0V100M0 26H100M27 0V100M0 27H100M28 0V100M0 28H100M29 0V100M0 29H100M31 0V100M0 31H100M32 0V100M0 32H100M33 0V100M0 33H100M34 0V100M0 34H100M35 0V100M0 35H100M36 0V100M0 36H100M37 0V100M0 37H100M38 0V100M0 38H100M39 0V100M0 39H100M41 0V100M0 41H100M42 0V100M0 42H100M43 0V100M0 43H100M44 0V100M0 44H100M45 0V100M0 45H100M46 0V100M0 46H100M47 0V100M0 47H100M48 0V100M0 48H100M49 0V100M0 49H100M51 0V100M0 51H100M52 0V100M0 52H100M53 0V100M0 53H100M54 0V100M0 54H100M55 0V100M0 55H100M56 0V100M0 56H100M57 0V100M0 57H100M58 0V100M0 58H100M59 0V100M0 59H100M61 0V100M0 61H100M62 0V100M0 62H100M63 0V100M0 63H100M64 0V100M0 64H100M65 0V100M0 65H100M66 0V100M0 66H100M67 0V100M0 67H100M68 0V100M0 68H100M69 0V100M0 69H100M71 0V100M0 71H100M72 0V100M0 72H100M73 0V100M0 73H100M74 0V100M0 74H100M75 0V100M0 75H100M76 0V100M0 76H100M77 0V100M0 77H100M78 0V100M0 78H100M79 0V100M0 79H100M81 0V100M0 81H100M82 0V100M0 82H100M83 0V100M0 83H100M84 0V100M0 84H100M85 0V100M0 85H100M86 0V100M0 86H100M87 0V100M0 87H100M88 0V100M0 88H100M89 0V100M0 89H100M91 0V100M0 91H100M92 0V100M0 92H100M93 0V100M0 93H100M94 0V100M0 94H100M95 0V100M0 95H100M96 0V100M0 96H100M97 0V100M0 97H100M98 0V100M0 98H100M99 0V100M0 99H100" stroke="#1e1e32" stroke-opacity="0.24" stroke-width="1" fill="none" vector-effect="non-scaling-stroke"/>
<path d="M0 0V100M0 0H100M10 0V100M0 10H100M20 0V100M0 20H100M30 0V100M0 30H100M40 0V100M0 40H100M50 0V100M0 50H100M60 0V100M0 60H100M70 0V100M0 70H100M80 0V100M0 80H100M90 0V100M0 90H100M100 0V100M0 100H100" stroke="#1e1e32" stroke-opacity="0.56" stroke-width="1" fill="none" vector-effect="non-scaling-stroke"/>
</g>
<polygon points="646.10,344.56 719.10,360.68 693.80,398.08 620.80,381.96" fill="none" stroke="#1a1a1a" stroke-width="1.8" stroke-linejoin="round"/>
<polygon points="719.10,360.68 792.10,376.80 766.80,414.20 693.80,398.08" fill="none" stroke="#1a1a1a" stroke-width="1.8" stroke-linejoin="round"/>
<polygon points="792.10,376.80 865.10,392.92 839.80,430.32 766.80,414.20" fill="none" stroke="#1a1a1a" stroke-width="1.8" stroke-linejoin="round"/>
<polygon points="865.10,392.92 938.10,409.04 912.80,446.44 839.80,430.32" fill="none" stroke="#1a1a1a" stroke-width="1.8" stroke-linejoin="round"/>
<polygon points="817.40,339.40 890.40,355.52 865.10,392.92 792.10,376.80" fill="none" stroke="#1a1a1a" stroke-width="1.8" stroke-linejoin="round"/>
<polygon points="766.80,414.20 839.80,430.32 814.50,467.72 741.50,451.60" fill="none" stroke="#1a1a1a" stroke-width="1.8" stroke-linejoin="round"/>
<polygon points="570.20,456.76 544.90,494.16 617.90,510.28" fill="none" stroke="#1a1a1a" stroke-width="1.8" stroke-linejoin="round"/>
<line x1="424.20" y1="424.52" x2="497.20" y2="440.64" stroke="#1a1a1a" stroke-width="1.8"/>
<polygon points="691.10,526.80 762.40,495.40 775.80,537.10 815.30,528.60 821.20,582.20 769.50,583.00" fill="none" stroke="#1a1a1a" stroke-width="1.8" stroke-linejoin="round"/>
<g transform="matrix(36.5 8.06 -12.65 18.7 742.50 269.00)"><circle cx="0" cy="0" r="1" fill="none" stroke="#1a1a1a" stroke-width="1.8" vector-effect="non-scaling-stroke"/></g>
<g transform="matrix(36.5 8.06 -12.65 18.7 746.00 203.80)"><circle cx="0" cy="0" r="1" fill="none" stroke="#1a1a1a" stroke-width="1.8" vector-effect="non-scaling-stroke"/></g>
<line x1="779.00" y1="277.06" x2="782.50" y2="211.86" stroke="#1a1a1a" stroke-width="1.8"/>
<line x1="573.10" y1="328.44" x2="547.80" y2="365.84" stroke="#1a1a1a" stroke-width="1.8"/>
<polygon points="500.10,312.32 573.10,328.44 576.60,263.24 503.60,247.12" fill="#bababa" stroke="#1a1a1a" stroke-width="1.8" stroke-linejoin="round"/>
<polygon points="500.10,312.32 474.80,349.72 478.30,284.52 503.60,247.12" fill="#404040" stroke="#1a1a1a" stroke-width="1.8" stroke-linejoin="round"/>
<polygon points="474.80,349.72 547.80,365.84 551.30,300.64 478.30,284.52" fill="#b6b6b6" stroke="#1a1a1a" stroke-width="1.8" stroke-linejoin="round"/>
<line x1="576.60" y1="263.24" x2="551.30" y2="300.64" stroke="#1a1a1a" stroke-width="1.8"/>
<defs><linearGradient id="hexL" gradientUnits="userSpaceOnUse" x1="1040" y1="270" x2="1068" y2="330"><stop offset="0" stop-color="#b4b4b4"/><stop offset="0.45" stop-color="#939393"/><stop offset="1" stop-color="#9c9c9c"/></linearGradient></defs>
<polygon points="1036.90,335.50 1065.90,323.80 1069.40,258.60 1040.40,270.30" fill="url(#hexL)" stroke="#1a1a1a" stroke-width="1.8" stroke-linejoin="round"/>
<polygon points="1065.90,323.80 1102.60,331.70 1106.10,266.50 1069.40,258.60" fill="#b3b3b3" stroke="#1a1a1a" stroke-width="1.8" stroke-linejoin="round"/>
<polygon points="1102.60,331.70 1109.50,352.10 1113.00,286.90 1106.10,266.50" fill="#363636" stroke="#1a1a1a" stroke-width="1.8" stroke-linejoin="round"/>
<polygon points="1043.80,355.90 1036.90,335.50 1040.40,270.30 1047.30,290.70" fill="#353535" stroke="#1a1a1a" stroke-width="1.8" stroke-linejoin="round"/>
<polygon points="1109.50,352.10 1080.50,363.80 1084.00,298.60 1113.00,286.90" fill="#9d9d9d" stroke="#1a1a1a" stroke-width="1.8" stroke-linejoin="round"/>
<line x1="1241" y1="650.6" x2="1242" y2="632" stroke="#2a2a8a" stroke-width="2"/><polygon points="1239.5,638 1242.1,630.5 1244.5,638" fill="#2a2a8a"/>
<line x1="1241" y1="650.6" x2="1246" y2="644" stroke="#228822" stroke-width="1.6"/>
<line x1="1241" y1="650.6" x2="1261" y2="655.2" stroke="#8a2222" stroke-width="2"/><polygon points="1255,652 1262.5,655.4 1254.5,656.5" fill="#8a2222"/>
<text x="1244.6" y="631" font-family="Liberation Sans" font-size="9" fill="#000">Z</text>
<text x="1248.6" y="643" font-family="Liberation Sans" font-size="9" fill="#000">Y</text>
<text x="1264.6" y="656.5" font-family="Liberation Sans" font-size="9" fill="#000">X</text>
</svg>
<svg class="a" style="left:1271px;top:80px" width="30" height="400" viewBox="1271 80 30 400">
<rect x="1271" y="80" width="30" height="400" fill="#f2f1f0"/>
<path d="M1282.5 83.5v5M1285.5 83.5v5M1288.5 83.5v5" stroke="#c4c0bb" stroke-width="0.9"/>
<rect x="1274.5" y="92.8" width="23" height="22.5" rx="3.5" fill="url(#gBtn)" stroke="#b6b2ad"/>
<rect x="1274.5" y="118.8" width="23" height="22.5" rx="3.5" fill="url(#gBtn)" stroke="#b6b2ad"/>
<rect x="1274.5" y="144.8" width="23" height="22.5" rx="3.5" fill="url(#gBtn)" stroke="#b6b2ad"/>
<rect x="1274.5" y="170.8" width="23" height="22.5" rx="3.5" fill="url(#gBtn)" stroke="#b6b2ad"/>
<rect x="1274.5" y="196.8" width="23" height="22.5" rx="3.5" fill="url(#gBtn)" stroke="#b6b2ad"/>
<rect x="1274.5" y="222.8" width="23" height="22.5" rx="3.5" fill="url(#gBtn)" stroke="#b6b2ad"/>
<rect x="1274.5" y="248.8" width="23" height="22.5" rx="3.5" fill="url(#gBtn)" stroke="#b6b2ad"/>
<rect x="1274.5" y="274.8" width="23" height="22.5" rx="3.5" fill="url(#gBtn)" stroke="#b6b2ad"/>
<rect x="1274.5" y="300.8" width="23" height="22.5" rx="3.5" fill="url(#gBtn)" stroke="#b6b2ad"/>
<rect x="1274.5" y="326.8" width="23" height="22.5" rx="3.5" fill="url(#gBtn)" stroke="#b6b2ad"/>
<rect x="1274.5" y="352.8" width="23" height="22.5" rx="3.5" fill="url(#gBtn)" stroke="#b6b2ad"/>
<rect x="1274.5" y="378.8" width="23" height="22.5" rx="3.5" fill="url(#gBtn)" stroke="#b6b2ad"/>
<rect x="1274.5" y="404.8" width="23" height="22.5" rx="3.5" fill="url(#gBtn)" stroke="#b6b2ad"/>
<rect x="1274.5" y="430.8" width="23" height="22.5" rx="3.5" fill="url(#gBtn)" stroke="#b6b2ad"/>
<path d="M1282 103.0v-3a4 4 0 0 1 8 0v3" fill="none" stroke="#0a3f33" stroke-width="2.4"/><path d="M1282 103.0v-3a4 4 0 0 1 8 0v3" fill="none" stroke="#1da383" stroke-width="1.2"/><path d="M1280.5 103.0h11v8h-11z" fill="#1da383" stroke="#0a3f33" stroke-width="1.0" stroke-linejoin="round"/>
<path d="M1279 137.0l14-13" stroke="#0a3f33" stroke-width="4"/><path d="M1279 137.0l14-13" stroke="#1da383" stroke-width="2.2"/><circle cx="1286" cy="130.0" r="3.6" fill="#1da383" stroke="#0a3f33"/>
<path d="M1279 161.0h14v3h-14zM1284.5 148.0h3v13h-3z" fill="#1da383" stroke="#0a3f33" stroke-width="1.0" stroke-linejoin="round"/>
<path d="M1282 174.0h2.5v3h3v-3h2.5v3h3v2.5h-3v3h3v2.5h-3v3h-2.5v-3h-3v3h-2.5v-3h-3v-2.5h3v-3h-3v-2.5h3z" fill="#1da383" stroke="#0a3f33" stroke-width="1.0" stroke-linejoin="round"/>
<path d="M1280 202.0l12 12M1292 202.0l-12 12" stroke="#0a3f33" stroke-width="5"/><path d="M1280 202.0l12 12M1292 202.0l-12 12" stroke="#1da383" stroke-width="3"/>
<path d="M1279 233.0l13-6M1280 240.0l13-6" stroke="#0a3f33" stroke-width="4"/><path d="M1279 233.0l13-6M1280 240.0l13-6" stroke="#1da383" stroke-width="2.2"/>
<path d="M1281 264.0l12-10" stroke="#0a3f33" stroke-width="3.4"/><path d="M1281 264.0l12-10" stroke="#1da383" stroke-width="1.8"/><circle cx="1281" cy="264.0" r="3.2" fill="#1da383" stroke="#0a3f33"/>
<circle cx="1286" cy="286.0" r="5" fill="none" stroke="#0a3f33" stroke-width="3"/><circle cx="1286" cy="286.0" r="5" fill="none" stroke="#1da383" stroke-width="1.6"/><circle cx="1286" cy="280.5" r="2.2" fill="#1da383" stroke="#0a3f33" stroke-width="0.8"/><circle cx="1291.5" cy="286.0" r="2.2" fill="#1da383" stroke="#0a3f33" stroke-width="0.8"/><circle cx="1286" cy="291.5" r="2.2" fill="#1da383" stroke="#0a3f33" stroke-width="0.8"/><circle cx="1280.5" cy="286.0" r="2.2" fill="#1da383" stroke="#0a3f33" stroke-width="0.8"/>
<circle cx="1286" cy="312.0" r="6.5" fill="none" stroke="#0a3f33" stroke-width="3"/><circle cx="1286" cy="312.0" r="6.5" fill="none" stroke="#1da383" stroke-width="1.5"/><circle cx="1286" cy="312.0" r="2.8" fill="#1da383" stroke="#0a3f33"/>
<circle cx="1280.5" cy="338.0" r="1.9" fill="#1da383" stroke="#0a3f33" stroke-width="0.8"/><circle cx="1286" cy="338.0" r="1.9" fill="#1da383" stroke="#0a3f33" stroke-width="0.8"/><circle cx="1291.5" cy="338.0" r="1.9" fill="#1da383" stroke="#0a3f33" stroke-width="0.8"/>
<path d="M1279 365.0l9 5" stroke="#0a3f33" stroke-width="3.4"/><path d="M1279 365.0l9 5" stroke="#1da383" stroke-width="1.8"/><circle cx="1290" cy="360.0" r="1.8" fill="#1da383" stroke="#0a3f33" stroke-width="0.8"/>
<path d="M1284.5 383.5h3v5h5v3h-5v5h-3v-5h-5v-3h5z" fill="#1da383" stroke="#0a3f33" stroke-width="1.0" stroke-linejoin="round"/>
<path d="M1284 413.5v8M1282 421.5h4M1284 413.5h8.3v3" fill="none" stroke="#0f6e55" stroke-width="1.4"/><path d="M1279.5 415.5v5M1281.2 415.5v5M1286 410.5h5M1286 412h5" stroke="#2a9a7a" stroke-width="1"/>
<rect x="1279.5" y="435.5" width="13.5" height="13" rx="1" fill="#1da383" stroke="#0a3f33" stroke-width="1"/><circle cx="1283.7" cy="443.6" r="1.7" fill="none" stroke="#0a3f33" stroke-width="0.9"/>
</svg>
<svg class="a" style="left:276px;top:681px" width="1025" height="63" viewBox="276 681 1025 63">
<defs><linearGradient id="gMdi" x1="0" y1="0" x2="0" y2="1"><stop offset="0" stop-color="#ffffff"/><stop offset="1" stop-color="#f1f0ee"/></linearGradient></defs>
<rect x="276" y="681" width="1025" height="63" fill="#f2f1f0"/>
<rect x="276" y="714" width="1025" height="1" fill="#d9d6d2"/>
<path d="M282.5 681v30q0 2 2 2h227q2 0 2-2v-30" fill="url(#gMdi)" stroke="#c6c2bd"/><rect x="514" y="714" width="787" height="0"/>
<rect x="283" y="713.2" width="1018" height="1" fill="#cfcbc6"/>
<path d="M289.5 690.5h8.5v3.2h-5v2.6h4v3h-4v3.7h-3.5z" fill="#ee3a12" stroke="#b02000" stroke-width="0.5"/><circle cx="298.5" cy="698.5" r="4" fill="#1535c8"/><g stroke="#1535c8" stroke-width="1.8"><path d="M302.10 698.50L304.10 698.50"/><path d="M301.05 701.05L302.46 702.46"/><path d="M298.50 702.10L298.50 704.10"/><path d="M295.95 701.05L294.54 702.46"/><path d="M294.90 698.50L292.90 698.50"/><path d="M295.95 695.95L294.54 694.54"/><path d="M298.50 694.90L298.50 692.90"/><path d="M301.05 695.95L302.46 694.54"/></g><circle cx="298.5" cy="698.5" r="1.5" fill="#ffffff"/>
<path d="M491.5 693l10 10M501.5 693l-10 10" stroke="#5a5a5a" stroke-width="3"/>
</svg>
<div class="t" style="left:481.50px;top:11.90px;font-size:15px;font-weight:400;color:#3c3c3c;transform:scaleX(1.0641)">Draft</div>
<div class="t" style="left:50.20px;top:51.20px;font-size:15px;font-weight:400;color:#3c3c3c;transform:scaleX(0.9757)">Top</div>
<div class="t" style="left:168.20px;top:52.10px;font-size:15px;font-weight:400;color:#3c3c3c;transform:scaleX(0.9426)">2px</div>
<div class="t" style="left:219.40px;top:52.10px;font-size:15px;font-weight:400;color:#3c3c3c;transform:scaleX(0.9246)">0,20</div>
<div class="t" style="left:2.00px;top:84.80px;font-size:15px;font-weight:400;color:#3c3c3c;transform:scaleX(0.9910)">Combo View</div>
<div class="t" style="left:8.80px;top:112.20px;font-size:15px;font-weight:400;color:#3c3c3c;transform:scaleX(1.0157)">Model</div>
<div class="t" style="left:66.40px;top:112.70px;font-size:15px;font-weight:400;color:#3c3c3c;transform:scaleX(0.9284)">Tasks</div>
<div class="t" style="left:7.50px;top:142.70px;font-size:15px;font-weight:400;color:#3c3c3c;transform:scaleX(1.0106)">Labels &amp; Attributes</div>
<div class="t" style="left:6.00px;top:164.30px;font-size:15px;font-weight:400;color:#3c3c3c;transform:scaleX(1.0178)">Application</div>
<div class="t" style="left:48.40px;top:183.10px;font-size:15px;font-weight:700;color:#3c3c3c;transform:scaleX(0.9758)">F2-T27-ejemplo-work</div>
<div class="t" style="left:68.40px;top:202.30px;font-size:15px;font-weight:400;color:#3c3c3c;transform:scaleX(0.8543)">Face</div>
<div class="t" style="left:68.40px;top:221.30px;font-size:15px;font-weight:400;color:#a3a3a3;transform:scaleX(0.8976)">Face001</div>
<div class="t" style="left:68.40px;top:240.30px;font-size:15px;font-weight:400;color:#3c3c3c;transform:scaleX(0.8976)">Face002</div>
<div class="t" style="left:68.40px;top:259.30px;font-size:15px;font-weight:400;color:#3c3c3c;transform:scaleX(0.8976)">Face003</div>
<div class="t" style="left:68.40px;top:278.30px;font-size:15px;font-weight:400;color:#3c3c3c;transform:scaleX(0.8976)">Face004</div>
<div class="t" style="left:68.40px;top:297.30px;font-size:15px;font-weight:400;color:#a3a3a3;transform:scaleX(0.8976)">Face005</div>
<div class="t" style="left:68.40px;top:316.30px;font-size:15px;font-weight:400;color:#3c3c3c;transform:scaleX(0.9274)">Line</div>
<div class="t" style="left:68.40px;top:335.30px;font-size:15px;font-weight:400;color:#3c3c3c;transform:scaleX(0.9346)">Line001</div>
<div class="t" style="left:68.40px;top:354.30px;font-size:15px;font-weight:400;color:#a3a3a3;transform:scaleX(0.8976)">Face007</div>
<div class="t" style="left:68.40px;top:373.30px;font-size:15px;font-weight:400;color:#a3a3a3;transform:scaleX(0.8976)">Face008</div>
<div class="t" style="left:9.50px;top:412.00px;font-size:15px;font-weight:400;color:#3c3c3c;transform:scaleX(1.0193)">Property</div>
<div class="t" style="left:109.20px;top:412.00px;font-size:15px;font-weight:400;color:#3c3c3c;transform:scaleX(1.0000)">Value</div>
<div class="t" style="left:10.70px;top:689.10px;font-size:15px;font-weight:400;color:#3c3c3c;transform:scaleX(0.9984)">View</div>
<div class="t" style="left:60.40px;top:689.10px;font-size:15px;font-weight:400;color:#3c3c3c;transform:scaleX(0.9436)">Data</div>
<div class="t" style="left:313.50px;top:690.10px;font-size:15px;font-weight:400;color:#3c3c3c;transform:scaleX(0.9780)">F2-T27-ejemplo-work : 1*</div>
<div class="t" style="left:1176.10px;top:722.10px;font-size:15px;font-weight:400;color:#3c3c3c;transform:scaleX(0.9539)">128.04 x 77.81 mm</div>
</body></html>
